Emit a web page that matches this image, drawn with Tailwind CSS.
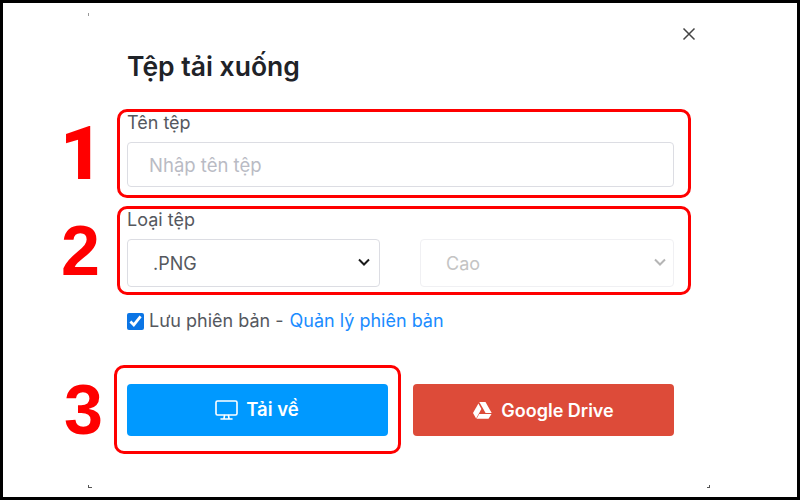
<!DOCTYPE html>
<html lang="vi">
<head>
  <meta charset="UTF-8" />
  <title>Tệp tải xuống</title>
  <script src="https://cdn.jsdelivr.net/npm/@tailwindcss/browser@4"></script>
</head>
<body class="bg-white">
  <div class="relative w-[800px] h-[500px] overflow-hidden border-[3px] border-black bg-white font-['Inter',sans-serif]">
    <!-- Close -->
    <button class="absolute left-[679px] top-[24px] text-[#444]">
      <svg width="14" height="14" viewBox="0 0 14 14" fill="none" stroke="currentColor" stroke-width="1.5"><path d="M1.5 1.5l11 11M12.5 1.5l-11 11"/></svg>
    </button>

    <!-- Dialog -->
    <div class="w-[547px] ml-[124px] pt-[46px]">
      <h1 class="text-[26.5px] leading-[34px] font-semibold text-[#1f2328]">Tệp tải xuống</h1>

      <div class="mt-[30px]">
        <label class="block text-[18px] leading-[20px] text-[#55585e]">Tên tệp</label>
        <input type="text" placeholder="Nhập tên tệp" class="mt-[9px] block w-full h-[45px] px-[21px] text-[18.500px] border border-[#dcdde3] rounded-[4px] placeholder:text-[#b9bbc4] outline-none" />
      </div>

      <div class="mt-[23px]">
        <label class="block text-[18px] leading-[20px] text-[#55585e]">Loại tệp</label>
        <div class="mt-[9px] flex justify-between">
          <div class="relative w-[253px]">
            <select class="appearance-none block w-full h-[48px] pl-[25px] text-[18px] text-[#55585e] bg-white border border-[#dcdde3] rounded-[4px] outline-none">
              <option>.PNG</option>
            </select>
            <svg class="absolute right-[10px] top-[19px] text-[#1b1b1b]" width="12" height="9" viewBox="0 0 12 9" fill="none" stroke="currentColor" stroke-width="2"><path d="M1 1.5l5 5 5-5"/></svg>
          </div>
          <div class="relative w-[254px]">
            <select disabled class="appearance-none block w-full h-[48px] pl-[25px] text-[18px] text-[#c4c4c4] bg-white border border-[#f0f0f3] rounded-[4px] outline-none">
              <option>Cao</option>
            </select>
            <svg class="absolute right-[8px] top-[19px] text-[#b5b5b5]" width="12" height="9" viewBox="0 0 12 9" fill="none" stroke="currentColor" stroke-width="2"><path d="M1 1.5l5 5 5-5"/></svg>
          </div>
        </div>
      </div>

      <div class="mt-[24px] flex items-center text-[18px] leading-[20px] text-[#55585e]">
        <input type="checkbox" checked class="w-[17px] h-[17px] mr-[5px] accent-[#0b75e5]" />
        <span>Lưu phiên bản -&nbsp;</span><a class="text-[#1a8cff] ml-px">Quản lý phiên bản</a>
      </div>

      <div class="mt-[53px] flex justify-between">
        <button class="w-[261px] h-[52px] flex items-center justify-center gap-[8px] rounded-[4px] bg-[#0099ff] text-white text-[18.500px] font-semibold">
          <svg width="23" height="20" viewBox="0 0 23 20" fill="none" stroke="currentColor" stroke-width="1.6" stroke-linecap="round" class="-ml-px"><rect x="1" y="1" width="21" height="14" rx="1.5"/><path d="M9.5 15.5l-.5 3M13.5 15.5l.5 3M6 19h11"/></svg>
          <span>Tải về</span>
        </button>
        <button class="w-[261px] h-[52px] flex items-center justify-center gap-[9px] rounded-[4px] bg-[#dd4b39] text-white text-[18px] font-semibold">
          <svg width="19" height="17" viewBox="0 0 19 17" fill="currentColor"><path d="M6.3 0h6.2l6.2 11h-6.1z"/><path d="M5.4 1.5l3 5.4-5.3 9.6L0 11z"/><path d="M6.2 12l-2.600 4.800h11.900l3-4.800z"/></svg>
          <span>Google Drive</span>
        </button>
      </div>
    </div>

    <!-- Annotations drawn over the screenshot -->
    <div class="absolute left-[114px] top-[106px] w-[574px] h-[89px] border-[3px] border-[#ff0000] rounded-[10px]"></div>
    <div class="absolute left-[114px] top-[203px] w-[574px] h-[89px] border-[3px] border-[#ff0000] rounded-[10px]"></div>
    <div class="absolute left-[111px] top-[362px] w-[287px] h-[89px] border-[3px] border-[#ff0000] rounded-[10px]"></div>
    <span class="absolute left-[57px] top-[108px] text-[74px] leading-[86px] font-black text-[#ff0000] font-['Roboto',sans-serif]">1</span>
    <span class="absolute left-[58px] top-[205px] text-[70px] leading-[86px] font-bold text-[#ff0000] font-['Liberation_Sans',sans-serif]">2</span>
    <span class="absolute left-[61px] top-[364px] text-[70px] leading-[86px] font-bold text-[#ff0000] font-['Liberation_Sans',sans-serif]">3</span>

    <!-- Crop marks left in the original capture -->
    <div class="absolute left-[85px] top-[10px] w-px h-[3px] bg-[#999]"></div>
    <div class="absolute left-[85px] top-[482px] w-[4px] h-[3px] border-l border-b border-[#555]"></div>
    <div class="absolute left-[704px] top-[482px] w-[3px] h-[3px] border-r border-b border-[#555]"></div>
  </div>
</body>
</html>
